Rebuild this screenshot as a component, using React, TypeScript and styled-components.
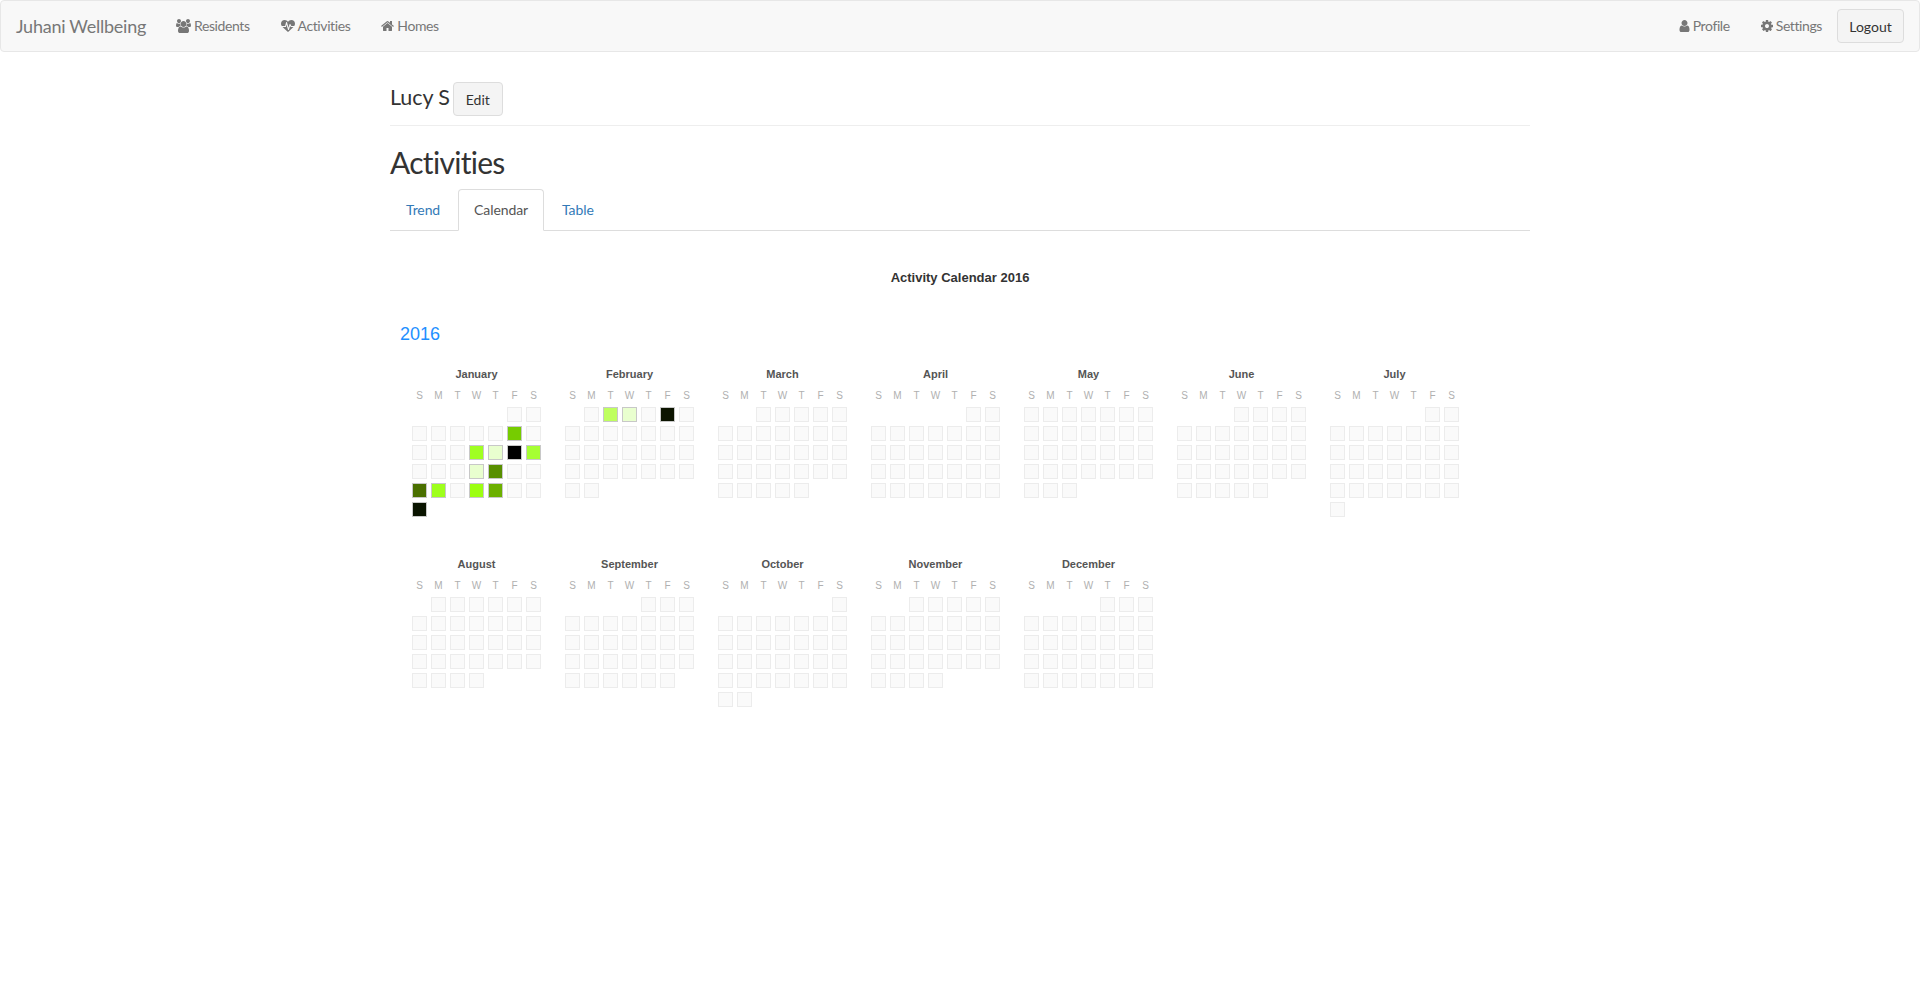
import * as React from 'react';
import styled, { createGlobalStyle } from 'styled-components';

const uiFont = '"Lato", "Noto Sans", sans-serif';
const chartFont = '"Liberation Sans", Arial, sans-serif';

const GlobalStyle = createGlobalStyle`
  html, body {
    margin: 0;
    padding: 0;
    background: #fff;
    font-family: ${uiFont};
    font-size: 14px;
    color: #333;
  }
  * { box-sizing: border-box; }
`;

const S = {
  Navbar: styled.nav`
    display: flex;
    justify-content: space-between;
    height: 52px;
    margin-bottom: 20px;
    background: #f8f8f8;
    border: 1px solid #e7e7e7;
    border-radius: 4px;
  `,
  NavGroup: styled.div`
    display: flex;
    align-items: flex-start;
  `,
  Brand: styled.a`
    display: block;
    width: 159px;
    padding: 15px 0 15px 15px;
    font-size: 18px;
    line-height: 20px;
    white-space: nowrap;
    color: #777;
    letter-spacing: -0.25px;
  `,
  NavLink: styled.a`
    display: flex;
    align-items: center;
    gap: 3px;
    height: 50px;
    padding: 0 15px 1px 16px;
    color: #777;
    font-size: 14px;
    letter-spacing: -0.4px;
  `,
  Icon: styled.svg`
    display: block;
    height: 14px;
    fill: currentColor;
    flex: none;
  `,
  LogoutButton: styled.button`
    margin: 8px 15px 0 0;
    width: 67px;
    height: 34px;
    padding: 0;
    background: #f4f4f4;
    border: 1px solid #ddd;
    border-radius: 4px;
    color: #333;
    font-family: ${uiFont};
    font-size: 14px;
  `,
  Container: styled.main`
    width: 1140px;
    margin: 0 auto;
  `,
  PageHeader: styled.div`
    display: flex;
    align-items: flex-start;
    gap: 3px;
    height: 54px;
    border-bottom: 1px solid #eee;
  `,
  ResidentName: styled.h2`
    margin: 13px 0 0;
    font-size: 21.5px;
    line-height: 24px;
    font-weight: 400;
    letter-spacing: -0.1px;
    color: #333;
  `,
  EditButton: styled.button`
    margin-top: 10px;
    width: 50px;
    height: 34px;
    padding: 0;
    background: #f4f4f4;
    border: 1px solid #ddd;
    border-radius: 4px;
    color: #333;
    font-family: ${uiFont};
    font-size: 14px;
  `,
  Heading: styled.h1`
    margin: 20px 0 10px;
    font-size: 30px;
    line-height: 33px;
    font-weight: 400;
    letter-spacing: -0.7px;
    color: #333;
  `,
  Tabs: styled.div`
    display: flex;
    height: 42px;
    border-bottom: 1px solid #ddd;
  `,
  Tab: styled.a<{ $active?: boolean }>`
    height: 42px;
    margin-right: 2px;
    padding: 10px 15px;
    line-height: 20px;
    font-size: 14px;
    letter-spacing: -0.1px;
    border: 1px solid ${({ $active }) => ($active ? '#ddd' : 'transparent')};
    border-bottom-color: ${({ $active }) => ($active ? '#fff' : 'transparent')};
    border-radius: 4px 4px 0 0;
    color: ${({ $active }) => ($active ? '#555' : '#337ab7')};
  `,
  ChartTitle: styled.div`
    margin-top: 38px;
    text-align: center;
    font-family: ${chartFont};
    font-size: 13px;
    line-height: 18px;
    font-weight: 700;
    color: #333;
  `,
  Year: styled.div`
    margin: 36px 0 22px 10px;
    font-family: ${chartFont};
    font-size: 18px;
    line-height: 22px;
    color: #1e90ff;
  `,
  Months: styled.div`
    display: grid;
    grid-template-columns: repeat(7, 129px);
    grid-auto-rows: 190px;
    column-gap: 24px;
    padding-left: 22px;
  `,
  Month: styled.section`
    font-family: ${chartFont};
  `,
  MonthName: styled.div`
    text-align: center;
    font-size: 11px;
    line-height: 14px;
    font-weight: 700;
    color: #555;
  `,
  DayLabels: styled.div`
    display: grid;
    grid-template-columns: repeat(7, 15px);
    column-gap: 4px;
    margin: 9px 0 5px;
  `,
  DayLabel: styled.div`
    text-align: center;
    font-size: 10px;
    line-height: 12px;
    color: #b0b0b0;
  `,
  Days: styled.div`
    display: grid;
    grid-template-columns: repeat(7, 15px);
    grid-auto-rows: 15px;
    gap: 4px;
  `,
  Day: styled.div<{ $fill?: string; $offset?: number }>`
    grid-column-start: ${({ $offset }) => ($offset ? $offset + 1 : 'auto')};
    background: ${({ $fill }) => $fill || '#fafafa'};
    border: 1px solid ${({ $fill }) => ($fill ? '#c8c8c8' : '#ececec')};
  `,
};

// font awesome 4 glyphs, cropped to the width they take in the font
const glyphs = {
  users: {
    box: [0, 0, 1920, 1792],
    d: 'M593 896q-162 5-265 128h-134q-82 0-138-40.500t-56-118.500q0-353 124-353 6 0 43.500 21t97.500 42.500 119 21.500q67 0 133-23-5 37-5 66 0 139 81 256zm1071 637q0 120-73 189.500t-194 69.500h-874q-121 0-194-69.500t-73-189.500q0-53 3.500-103.500t14-109 26.500-108.500 43-97.500 62-81 85.500-53.500 111.500-20q10 0 43 21.500t73 48 107 48 135 21.500 135-21.500 107-48 73-48 43-21.500q61 0 111.500 20t85.500 53.500 62 81 43 97.500 26.500 108.500 14 109 3.500 103.500zm-1024-1277q0 106-75 181t-181 75-181-75-75-181 75-181 181-75 181 75 75 181zm704 384q0 159-112.500 271.500t-271.500 112.500-271.500-112.500-112.500-271.500 112.500-271.500 271.500-112.500 271.500 112.500 112.500 271.500zm576 225q0 78-56 118.500t-138 40.500h-134q-103-123-265-128 81-117 81-256 0-29-5-66 66 23 133 23 59 0 119-21.500t97.500-42.500 43.500-21q124 0 124 353zm-128-609q0 106-75 181t-181 75-181-75-75-181 75-181 181-75 181 75 75 181z',
  },
  heartbeat: {
    box: [0, 0, 1792, 1792],
    d: 'M1280 1024h305q-5 6-10 10.500t-9 7.500l-3 4-623 600q-18 18-44 18t-44-18l-624-602q-5-2-21-20h369q22 0 39.500-13.500t22.500-34.500l70-281 190 667q6 20 23 33t39 13q21 0 38-13t23-33l146-485 56 112q18 35 57 35zm512-428q0 145-103 300h-369l-111-221q-8-17-25.500-27t-36.500-8q-45 5-56 46l-129 430-196-686q-6-20-23.500-33t-39.500-13-39 13.500-22 34.500l-116 464h-423q-103-155-103-300 0-220 127-344t351-124q62 0 126.500 21.500t120 58 95.500 68.500 76 68q36-36 76-68t95.500-68.500 120-58 126.500-21.500q224 0 351 124t127 344z',
  },
  home: {
    box: [64, 0, 1664, 1792],
    d: 'M1472 992v480q0 26-19 45t-45 19h-384v-384h-256v384h-384q-26 0-45-19t-19-45v-480q0-1 .5-3t.5-3l575-474 575 474q1 2 1 6zm223-69l-62 74q-8 9-21 11h-3q-13 0-21-7l-692-577-692 577q-12 8-24 7-13-2-21-11l-62-74q-8-10-7-23.500t11-21.500l719-599q32-26 76-26t76 26l244 204v-195q0-14 9-23t23-9h192q14 0 23 9t9 23v408l219 182q10 8 11 21.500t-7 23.500z',
  },
  user: {
    box: [192, 0, 1408, 1792],
    d: 'M1536 1399q0 109-62.500 187t-150.500 78h-854q-88 0-150.500-78t-62.500-187q0-85 8.500-160.500t31.500-152 58.500-131 94-89 134.500-34.500q131 128 313 128t313-128q76 0 134.500 34.500t94 89 58.500 131 31.500 152 8.500 160.500zm-256-887q0 159-112.500 271.500t-271.500 112.500-271.500-112.500-112.500-271.500 112.500-271.500 271.500-112.500 271.500 112.500 112.500 271.500z',
  },
  cog: {
    box: [128, 0, 1536, 1792],
    d: 'M1152 896q0-106-75-181t-181-75-181 75-75 181 75 181 181 75 181-75 75-181zm512-109v222q0 12-8 23t-20 13l-185 28q-19 54-39 91 35 50 107 138 10 12 10 25t-9 23q-27 37-99 108t-94 71q-12 0-26-9l-138-108q-44 23-91 38-16 136-29 186-7 28-36 28h-222q-14 0-24.500-8.500t-11.500-21.500l-28-184q-49-16-90-37l-141 107q-10 9-25 9-14 0-25-11-126-114-165-168-7-10-7-23 0-12 8-23 15-21 51-66.500t54-70.500q-27-50-41-99l-183-27q-13-2-21-12.500t-8-23.500v-222q0-12 8-23t19-13l186-28q14-46 39-92-40-57-107-138-10-12-10-24 0-10 9-23 26-36 98.500-107.500t94.500-71.500q13 0 26 10l138 107q44-23 91-38 16-136 29-186 7-28 36-28h222q14 0 24.500 8.500t11.500 21.500l28 184q49 16 90 37l142-107q9-9 24-9 13 0 25 10 129 119 165 170 7 8 7 22 0 12-8 23-15 21-51 66.500t-54 70.500q26 50 41 98l183 28q13 2 21 12.500t8 23.500z',
  },
};

const Glyph = ({ name }: { name: keyof typeof glyphs }) => {
  const { box, d } = glyphs[name];
  return (
    <S.Icon viewBox={box.join(' ')} width={(box[2] / 1792) * 14}>
      <path d={d} />
    </S.Icon>
  );
};

const dayLetters = ['S', 'M', 'T', 'W', 'T', 'F', 'S'];

type MonthData = {
  name: string;
  start: number;
  length: number;
  fills?: Record<number, string>;
};

const months: MonthData[] = [
  {
    name: 'January',
    start: 5,
    length: 31,
    fills: {
      8: '#76cc00',
      13: '#a0ff22',
      14: '#e9ffcf',
      15: '#000000',
      16: '#a6ff33',
      20: '#e9ffcf',
      21: '#588f00',
      24: '#4a7000',
      25: '#9eff1c',
      27: '#9cff11',
      28: '#6cb000',
      31: '#0a1400',
    },
  },
  {
    name: 'February',
    start: 1,
    length: 29,
    fills: { 2: '#bfff5f', 3: '#e9ffcf', 5: '#0c1400' },
  },
  { name: 'March', start: 2, length: 31 },
  { name: 'April', start: 5, length: 30 },
  { name: 'May', start: 0, length: 31 },
  { name: 'June', start: 3, length: 30 },
  { name: 'July', start: 5, length: 31 },
  { name: 'August', start: 1, length: 31 },
  { name: 'September', start: 4, length: 30 },
  { name: 'October', start: 6, length: 31 },
  { name: 'November', start: 2, length: 30 },
  { name: 'December', start: 4, length: 31 },
];

const CalendarMonth = ({ month }: { month: MonthData }) => (
  <S.Month>
    <S.MonthName>{month.name}</S.MonthName>
    <S.DayLabels>
      {dayLetters.map((letter, i) => (
        <S.DayLabel key={i}>{letter}</S.DayLabel>
      ))}
    </S.DayLabels>
    <S.Days>
      {Array.from({ length: month.length }, (_, i) => (
        <S.Day
          key={i}
          $offset={i === 0 ? month.start : 0}
          $fill={month.fills?.[i + 1]}
        />
      ))}
    </S.Days>
  </S.Month>
);

const App = () => (
  <>
    <GlobalStyle />
    <S.Navbar>
      <S.NavGroup>
        <S.Brand>Juhani Wellbeing</S.Brand>
        <S.NavLink>
          <Glyph name="users" />
          Residents
        </S.NavLink>
        <S.NavLink>
          <Glyph name="heartbeat" />
          Activities
        </S.NavLink>
        <S.NavLink>
          <Glyph name="home" />
          Homes
        </S.NavLink>
      </S.NavGroup>
      <S.NavGroup>
        <S.NavLink>
          <Glyph name="user" />
          Profile
        </S.NavLink>
        <S.NavLink>
          <Glyph name="cog" />
          Settings
        </S.NavLink>
        <S.LogoutButton>Logout</S.LogoutButton>
      </S.NavGroup>
    </S.Navbar>
    <S.Container>
      <S.PageHeader>
        <S.ResidentName>Lucy S</S.ResidentName>
        <S.EditButton>Edit</S.EditButton>
      </S.PageHeader>
      <S.Heading>Activities</S.Heading>
      <S.Tabs>
        <S.Tab>Trend</S.Tab>
        <S.Tab $active>Calendar</S.Tab>
        <S.Tab>Table</S.Tab>
      </S.Tabs>
      <S.ChartTitle>Activity Calendar 2016</S.ChartTitle>
      <S.Year>2016</S.Year>
      <S.Months>
        {months.map(month => (
          <CalendarMonth key={month.name} month={month} />
        ))}
      </S.Months>
    </S.Container>
  </>
);

export default App;
